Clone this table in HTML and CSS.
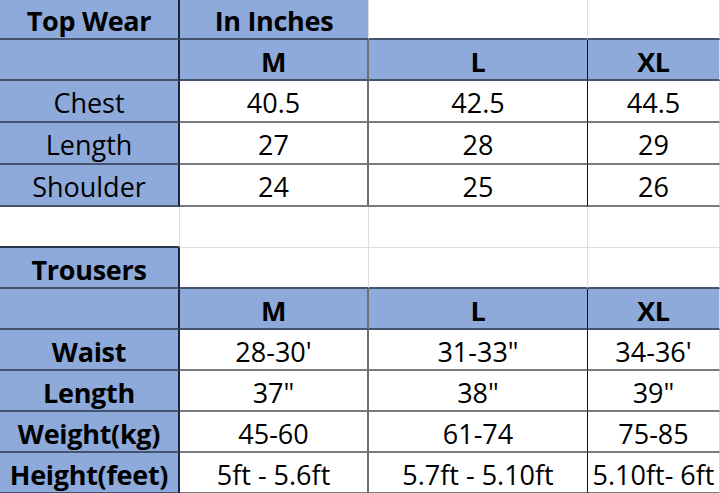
FILE: index.html
```html
<!DOCTYPE html>
<html>
<head>
<meta charset="utf-8">
<link rel="stylesheet" href="styles.css">
</head>
<body>
<div class="sheet">
  <div class="c h b br-navy bb-dark">Top Wear</div>
  <div class="c h b bb-dark">In Inches</div>
  <div class="c bb-dark"></div>
  <div class="c bb-dark"></div>

  <div class="c h br-navy bb-dark"></div>
  <div class="c h b br-gray bb-dark">M</div>
  <div class="c h b br-black bb-dark">L</div>
  <div class="c h b bb-dark">XL</div>

  <div class="c h br-navy bb-dark">Chest</div>
  <div class="c br-gray bb-gray">40.5</div>
  <div class="c br-black bb-gray">42.5</div>
  <div class="c bb-gray">44.5</div>

  <div class="c h br-navy bb-dark">Length</div>
  <div class="c br-gray bb-gray">27</div>
  <div class="c br-black bb-gray">28</div>
  <div class="c bb-gray">29</div>

  <div class="c h br-navy bb-dark">Shoulder</div>
  <div class="c br-gray bb-gray">24</div>
  <div class="c br-black bb-gray">25</div>
  <div class="c bb-gray">26</div>

  <div class="c bb-dark-part"></div>
  <div class="c"></div>
  <div class="c"></div>
  <div class="c"></div>

  <div class="c h b br-navy bb-dark">Trousers</div>
  <div class="c bb-dark"></div>
  <div class="c bb-dark"></div>
  <div class="c bb-dark"></div>

  <div class="c h br-navy bb-dark"></div>
  <div class="c h b br-gray bb-dark">M</div>
  <div class="c h b br-black bb-dark">L</div>
  <div class="c h b bb-dark">XL</div>

  <div class="c h b br-navy bb-dark">Waist</div>
  <div class="c br-gray bb-gray">28-30'</div>
  <div class="c br-black bb-gray">31-33"</div>
  <div class="c bb-gray">34-36'</div>

  <div class="c h b br-navy bb-dark">Length</div>
  <div class="c br-gray bb-gray">37"</div>
  <div class="c br-black bb-gray">38"</div>
  <div class="c bb-gray">39"</div>

  <div class="c h b br-navy bb-dark">Weight(kg)</div>
  <div class="c br-gray bb-gray">45-60</div>
  <div class="c br-black bb-gray">61-74</div>
  <div class="c bb-gray">75-85</div>

  <div class="c h b br-navy bb-dark">Height(feet)</div>
  <div class="c br-gray bb-gray">5ft - 5.6ft</div>
  <div class="c br-black bb-gray">5.7ft - 5.10ft</div>
  <div class="c bb-gray">5.10ft- 6ft</div>
</div>
</body>
</html>
```
FILE: styles.css
```css
html, body {
  margin: 0;
  padding: 0;
  background: #ffffff;
  overflow: hidden;
}
.sheet {
  display: grid;
  grid-template-columns: 180px 189px 219px 132px;
  grid-template-rows: 40px 41px 42px 42px 42px 41px 41px 41px 41px 41px 41px 41px;
  font-family: "Open Sans", "Noto Sans", sans-serif;
  font-size: 27px;
  color: #000000;
  width: 720px;
}
.c {
  box-sizing: border-box;
  display: flex;
  align-items: center;
  justify-content: center;
  padding-top: 3px;
  white-space: nowrap;
  overflow: hidden;
  border-right: 1px solid #dcdcdc;
  border-bottom: 1px solid #dcdcdc;
  line-height: 1;
}
.h { background: #8eaadb; }
.b { font-weight: 700; letter-spacing: -0.3px; }
.br-navy { border-right: 2px solid #1b2540; }
.br-gray { border-right: 2px solid #6f6f6f; }
.br-black { border-right: 1px solid #111111; }
.bb-dark { border-bottom: 2px solid #46536e; }
.bb-gray { border-bottom: 2px solid #7a7a7a; }
.bb-dark-part { border-bottom: 2px solid #2a3550; }
```
